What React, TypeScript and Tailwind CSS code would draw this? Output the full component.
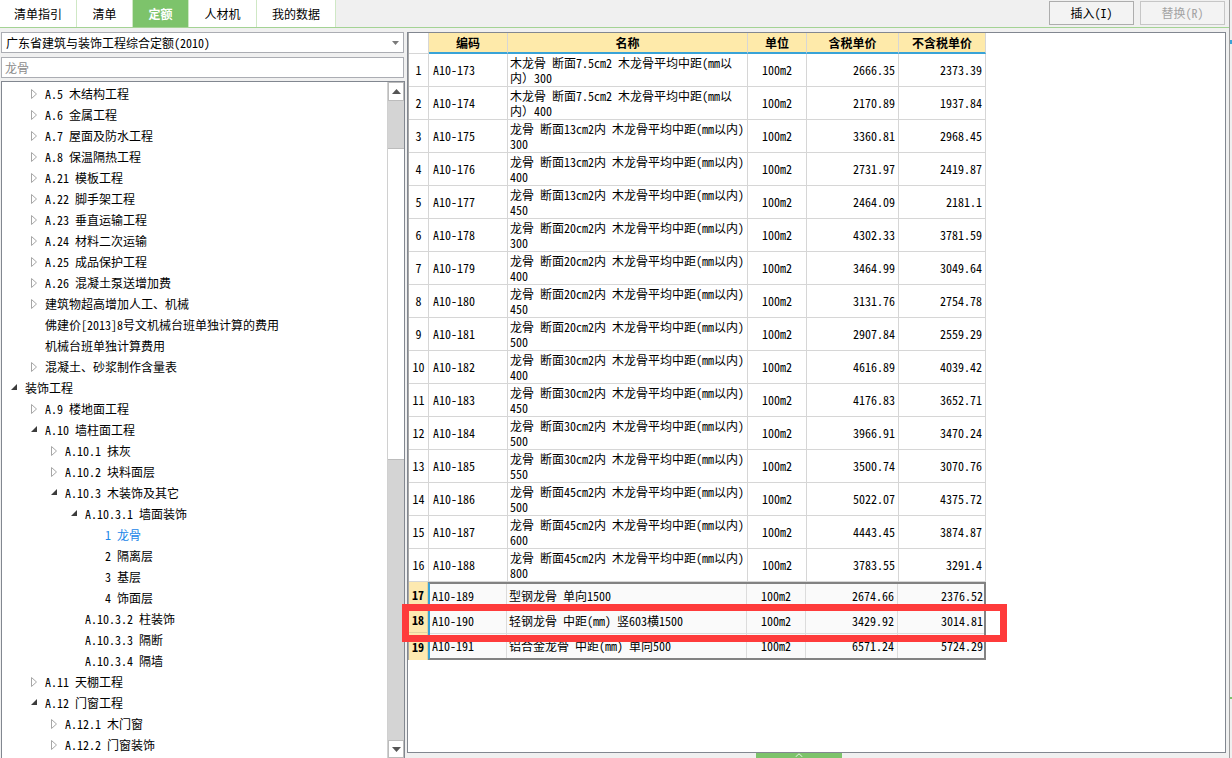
import React from "react";

const MONO = "font-[family-name:'Noto_Sans_Mono_CJK_SC','Noto_Sans_CJK_SC',sans-serif]";
const UI = "font-[family-name:'Noto_Sans_CJK_SC',sans-serif]";

type TreeNode = { level: number; label: string; icon?: "closed" | "open"; active?: boolean };

const TREE: TreeNode[] = [
  { level: 1, label: "A.5 木结构工程", icon: "closed" },
  { level: 1, label: "A.6 金属工程", icon: "closed" },
  { level: 1, label: "A.7 屋面及防水工程", icon: "closed" },
  { level: 1, label: "A.8 保温隔热工程", icon: "closed" },
  { level: 1, label: "A.21 模板工程", icon: "closed" },
  { level: 1, label: "A.22 脚手架工程", icon: "closed" },
  { level: 1, label: "A.23 垂直运输工程", icon: "closed" },
  { level: 1, label: "A.24 材料二次运输", icon: "closed" },
  { level: 1, label: "A.25 成品保护工程", icon: "closed" },
  { level: 1, label: "A.26 混凝土泵送增加费", icon: "closed" },
  { level: 1, label: "建筑物超高增加人工、机械", icon: "closed" },
  { level: 1, label: "佛建价[2013]8号文机械台班单独计算的费用" },
  { level: 1, label: "机械台班单独计算费用" },
  { level: 1, label: "混凝土、砂浆制作含量表", icon: "closed" },
  { level: 0, label: "装饰工程", icon: "open" },
  { level: 1, label: "A.9 楼地面工程", icon: "closed" },
  { level: 1, label: "A.10 墙柱面工程", icon: "open" },
  { level: 2, label: "A.10.1 抹灰", icon: "closed" },
  { level: 2, label: "A.10.2 块料面层", icon: "closed" },
  { level: 2, label: "A.10.3 木装饰及其它", icon: "open" },
  { level: 3, label: "A.10.3.1 墙面装饰", icon: "open" },
  { level: 4, label: "1 龙骨", active: true },
  { level: 4, label: "2 隔离层" },
  { level: 4, label: "3 基层" },
  { level: 4, label: "4 饰面层" },
  { level: 3, label: "A.10.3.2 柱装饰" },
  { level: 3, label: "A.10.3.3 隔断" },
  { level: 3, label: "A.10.3.4 隔墙" },
  { level: 1, label: "A.11 天棚工程", icon: "closed" },
  { level: 1, label: "A.12 门窗工程", icon: "open" },
  { level: 2, label: "A.12.1 木门窗", icon: "closed" },
  { level: 2, label: "A.12.2 门窗装饰", icon: "closed" },
];

const INDENT = ["pl-[9px]", "pl-[29px]", "pl-[49px]", "pl-[69px]", "pl-[89px]"];

type Row = { no: number; code: string; name: string[]; tax: string; net: string };

const mk = (no: number, size: string, dist: string, tax: string, net: string): Row => ({
  no,
  code: `A10-${172 + no}`,
  name: [`龙骨 断面${size}内 木龙骨平均中距(mm以内)`, dist],
  tax,
  net,
});

const ROWS: Row[] = [
  { no: 1, code: "A10-173", name: ["木龙骨 断面7.5cm2 木龙骨平均中距(mm以", "内）300"], tax: "2666.35", net: "2373.39" },
  { no: 2, code: "A10-174", name: ["木龙骨 断面7.5cm2 木龙骨平均中距(mm以", "内）400"], tax: "2170.89", net: "1937.84" },
  mk(3, "13cm2", "300", "3360.81", "2968.45"),
  mk(4, "13cm2", "400", "2731.97", "2419.87"),
  mk(5, "13cm2", "450", "2464.09", "2181.1"),
  mk(6, "20cm2", "300", "4302.33", "3781.59"),
  mk(7, "20cm2", "400", "3464.99", "3049.64"),
  mk(8, "20cm2", "450", "3131.76", "2754.78"),
  mk(9, "20cm2", "500", "2907.84", "2559.29"),
  mk(10, "30cm2", "400", "4616.89", "4039.42"),
  mk(11, "30cm2", "450", "4176.83", "3652.71"),
  mk(12, "30cm2", "500", "3966.91", "3470.24"),
  mk(13, "30cm2", "550", "3500.74", "3070.76"),
  mk(14, "45cm2", "500", "5022.07", "4375.72"),
  mk(15, "45cm2", "600", "4443.45", "3874.87"),
  mk(16, "45cm2", "800", "3783.55", "3291.4"),
];

const GROUP = [
  { no: 17, code: "A10-189", name: "型钢龙骨 单向1500", tax: "2674.66", net: "2376.52" },
  { no: 18, code: "A10-190", name: "轻钢龙骨 中距(mm) 竖603横1500", tax: "3429.92", net: "3014.81" },
  { no: 19, code: "A10-191", name: "铝合金龙骨 中距(mm) 单向500", tax: "6571.24", net: "5724.29" },
];

const TABS = [
  { label: "清单指引", w: "w-[77px]" },
  { label: "清单", w: "w-[56px]" },
  { label: "定额", w: "w-[56px]", active: true },
  { label: "人材机", w: "w-[68px]" },
  { label: "我的数据", w: "w-[79px]" },
];

function Arrow({ kind }: { kind?: "closed" | "open" }) {
  if (kind === "closed")
    return (
      <svg width="7" height="10" viewBox="0 0 7 10">
        <polygon points="0.5,0.5 5.5,5 0.5,9.5" fill="#fff" stroke="#a6a6a6" strokeWidth="1" />
      </svg>
    );
  if (kind === "open")
    return (
      <svg width="7" height="7" viewBox="0 0 7 7">
        <polygon points="6,0 6,6 0,6" fill="#3c3c3c" />
      </svg>
    );
  return null;
}

function TopBar() {
  return (
    <div className="flex h-[28px] border-b border-[#a4d394]">
      {TABS.map((t) => (
        <div
          key={t.label}
          className={`${t.w} ${UI} flex h-[27px] items-center justify-center border-r border-[#cfe8c5] text-[12px] ${
            t.active ? "bg-[#7dc36b] font-bold text-white" : "bg-white text-black"
          }`}
        >
          {t.label}
        </div>
      ))}
      <div className="flex-1" />
      <div className="mr-[4px] mt-[1px] flex gap-[6px]">
        <div className="flex h-[24px] w-[85px] items-center justify-center border border-[#adadad] bg-[#f3f3f3]">
          插入(I)
        </div>
        <div className="flex h-[24px] w-[85px] items-center justify-center border border-[#c6c6c6] bg-[#f3f3f3] text-[#a3a3a3]">
          替换(R)
        </div>
      </div>
    </div>
  );
}

function LeftPane() {
  return (
    <div className="flex w-[405px] flex-col pl-[1px]">
      <div className="flex h-[21px] w-[403px] items-center justify-between border border-[#abadb3] bg-white pl-[4px] pr-[4px]">
        <span>广东省建筑与装饰工程综合定额(2010)</span>
        <svg width="7" height="4" viewBox="0 0 7 4">
          <polygon points="0,0 7,0 3.5,4" fill="#7a7a7a" />
        </svg>
      </div>
      <div className="mt-[4px] flex h-[21px] w-[403px] items-center border border-[#abadb3] bg-white pl-[3px] text-[#8c8c8c]">
        龙骨
      </div>
      <div className="mt-[3px] flex h-[678px] w-[404px] border border-[#828790] bg-white">
        <div className="flex-1 overflow-hidden pt-[1px]">
          {TREE.map((n, i) => (
            <div key={i} className={`flex h-[21px] items-center ${INDENT[n.level]}`}>
              <div className="flex w-[14px] items-center">
                <Arrow kind={n.icon} />
              </div>
              <span className={`whitespace-nowrap ${n.active ? "text-[#1a86e8]" : "text-black"}`}>{n.label}</span>
            </div>
          ))}
        </div>
        <div className="flex w-[17px] flex-col border-l border-[#d0d0d0] bg-[#d4d4d4]">
          <div className="flex h-[19px] items-center justify-center border border-[#bcbcbc] bg-white">
            <svg width="9" height="5" viewBox="0 0 9 5">
              <polygon points="0,5 9,5 4.5,0" fill="#555" />
            </svg>
          </div>
          <div className="h-[47px]" />
          <div className="h-[312px] border-y border-[#bcbcbc] bg-white" />
          <div className="flex-1" />
          <div className="flex h-[18px] items-center justify-center border border-[#bcbcbc] bg-white">
            <svg width="9" height="5" viewBox="0 0 9 5">
              <polygon points="0,0 9,0 4.5,5" fill="#555" />
            </svg>
          </div>
        </div>
      </div>
    </div>
  );
}

function Table() {
  const cell = "border-r border-b border-[#d6d6d6] flex items-center";
  return (
    <div className="w-[578px] border-l border-[#a8a8a8]">
      <div className={`flex h-[21px] ${UI} font-bold`}>
        <div className="w-[20px] border-r border-b border-[#d6d6d6] bg-white" />
        {[
          ["编码", "w-[79px]"],
          ["名称", "w-[240px]"],
          ["单位", "w-[59px]"],
          ["含税单价", "w-[92px]"],
          ["不含税单价", "w-[87px]"],
        ].map(([t, w]) => (
          <div
            key={t}
            className={`${w} flex items-center justify-center border-r border-b-2 border-[#d6d6d6] border-b-[#39a3d7] bg-[#feeaaa]`}
          >
            {t}
          </div>
        ))}
      </div>
      {ROWS.map((r) => (
        <div key={r.no} className="flex h-[33px]">
          <div className={`${cell} w-[20px] justify-center`}>{r.no}</div>
          <div className={`${cell} w-[79px] pl-[4px]`}>{r.code}</div>
          <div className={`${cell} w-[240px] overflow-hidden pl-[2px]`}>
            <div className="leading-[15px] whitespace-pre">
              <div>{r.name[0]}</div>
              <div>{r.name[1]}</div>
            </div>
          </div>
          <div className={`${cell} w-[59px] justify-center`}>100m2</div>
          <div className={`${cell} w-[92px] justify-end pr-[3px]`}>{r.tax}</div>
          <div className={`${cell} w-[87px] justify-end pr-[3px]`}>{r.net}</div>
        </div>
      ))}
      <div className="flex">
        <div className="flex w-[20px] flex-col font-bold">
          <div className="flex h-[26px] items-center justify-center border-r border-b border-[#e3d3a0] bg-[#fde9b0]">17</div>
          <div className="flex h-[25px] items-center justify-center border-r border-b border-[#e3d3a0] bg-[#fde9b0]">18</div>
          <div className="flex h-[27px] items-center justify-center border-r border-[#e3d3a0] bg-[#fde9b0]">19</div>
        </div>
        <div className="w-[558px] border-2 border-[#828282] border-l-[#39a3d7] bg-[#fafafa]">
          {GROUP.map((g, i) => (
            <div key={g.no} className={`flex ${i < 2 ? "h-[25px] border-b border-[#dcdcdc]" : "h-[24px]"}`}>
              <div className="flex w-[77px] items-center border-r border-[#dcdcdc] pl-[2px]">{g.code}</div>
              <div className="flex w-[240px] items-center whitespace-nowrap border-r border-[#dcdcdc] pl-[2px]">{g.name}</div>
              <div className="flex w-[59px] items-center justify-center border-r border-[#dcdcdc]">100m2</div>
              <div className="flex w-[92px] items-center justify-end border-r border-[#dcdcdc] pr-[3px]">{g.tax}</div>
              <div className="flex w-[86px] items-center justify-end pr-[1px]">{g.net}</div>
            </div>
          ))}
        </div>
      </div>
    </div>
  );
}

function RightPane() {
  return (
    <div className="ml-[2px] flex flex-col">
      <div className="h-[721px] w-[819px] border border-[#828790] bg-white">
        <Table />
      </div>
      <div className="ml-[349px] flex h-[5px] w-[86px] items-start justify-center bg-[#7dc36b]">
        <svg width="8" height="4" viewBox="0 0 8 4">
          <polyline points="0.5,4 4,0.8 7.5,4" fill="none" stroke="#e8f5e2" strokeWidth="1" />
        </svg>
      </div>
    </div>
  );
}

export default function App() {
  return (
    <div className={`relative flex h-[758px] w-[1232px] overflow-hidden bg-[#f0f0f0] text-[12px] text-black ${MONO}`}>
      <div className="flex w-[1229px] flex-col">
        <TopBar />
        <div className="flex pt-[4px]">
          <LeftPane />
          <RightPane />
        </div>
      </div>
      <div className="flex w-[3px] flex-col border-l border-[#9c9c9c]">
        <div className="h-[40px]" />
        <div className="h-[4px] w-[2px] bg-[#39a3d7]" />
        <div className="h-[653px]" />
        <div className="h-[2px] w-[2px] bg-[#7dc36b]" />
      </div>
      <div className="pointer-events-none absolute left-[402px] top-[604px] h-[38px] w-[605px] border-[7px] border-[#fe3b3b]" />
    </div>
  );
}
